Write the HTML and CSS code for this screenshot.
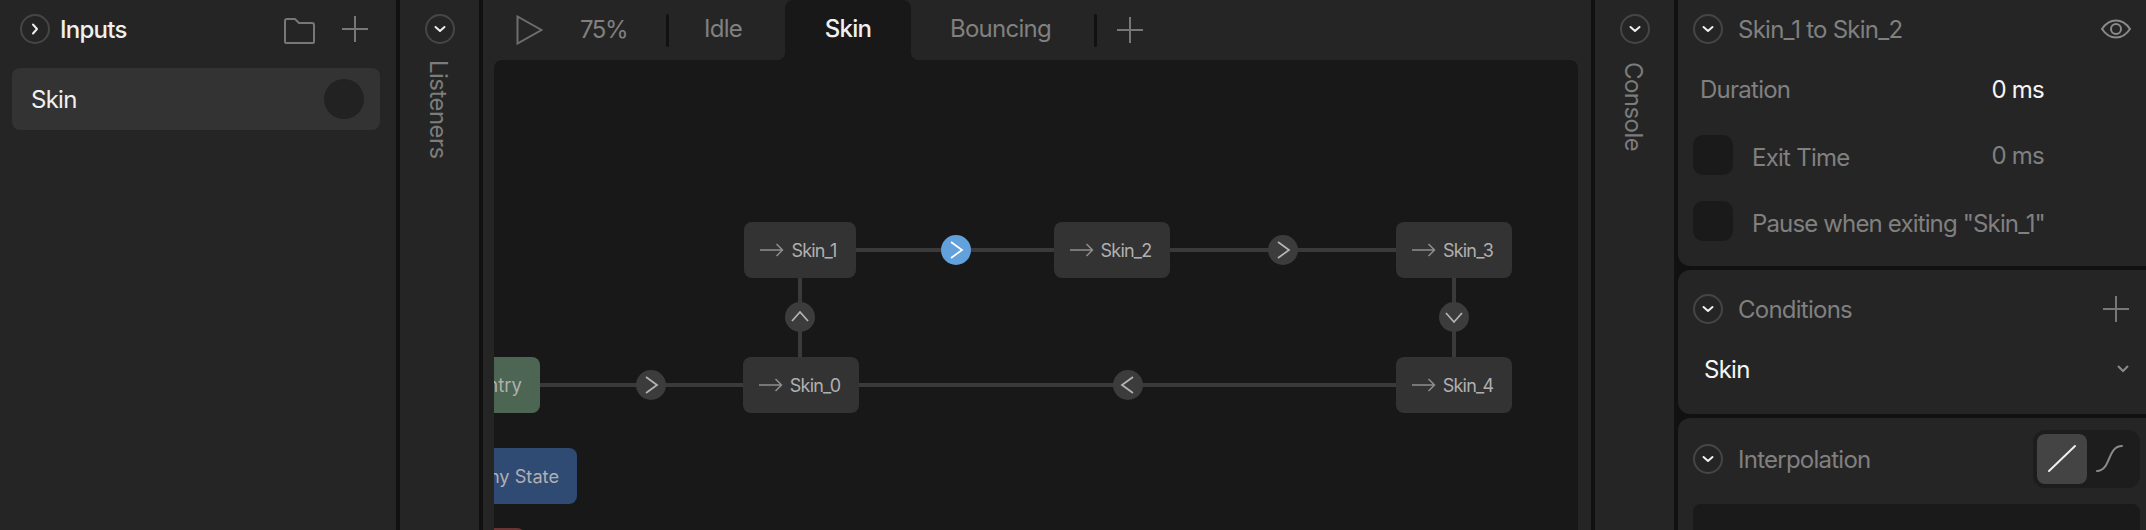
FILE: index.html
```html
<!DOCTYPE html>
<html lang="en">
<head>
<meta charset="utf-8">
<title>State machine editor</title>
<link rel="stylesheet" href="styles.css">
</head>
<body>
<svg class="defs" width="0" height="0" aria-hidden="true">
  <symbol id="chev-down" viewBox="0 0 30 30"><path d="M10.500 13l4.500 4 4.500-4" fill="none" stroke="currentColor" stroke-width="2" stroke-linecap="round" stroke-linejoin="round"/></symbol>
  <symbol id="chev-right" viewBox="0 0 30 30"><path d="M13 10.500l4 4.500-4 4.500" fill="none" stroke="currentColor" stroke-width="2" stroke-linecap="round" stroke-linejoin="round"/></symbol>
  <symbol id="plus" viewBox="0 0 26 26"><path d="M13 0v26M0 13h26" fill="none" stroke="currentColor" stroke-width="2"/></symbol>
  <symbol id="arrow" viewBox="0 0 24 14"><path d="M0 7h22.500M16.500 1l6 6-6 6" fill="none" stroke="currentColor" stroke-width="1.500"/></symbol>
</svg>

<aside class="panel inputs">
  <header class="inputs-head">
    <span class="round"><svg class="ico30 white"><use href="#chev-right"/></svg></span>
    <h2 class="inputs-title">Inputs</h2>
    <svg class="folder" viewBox="0 0 31 26" width="31" height="26"><path d="M1 24V3a2 2 0 0 1 2-2h8l4 4h13a2 2 0 0 1 2 2v17a1 1 0 0 1-1 1H2a1 1 0 0 1-1-1z" fill="none" stroke="#777" stroke-width="2"/></svg>
    <svg class="ico26 gray"><use href="#plus"/></svg>
  </header>
  <div class="input-row"><span>Skin</span><i class="toggle-dot"></i></div>
</aside>

<aside class="panel rail">
  <span class="round"><svg class="ico30 white"><use href="#chev-down"/></svg></span>
  <span class="rail-label">Listeners</span>
</aside>

<main class="panel center">
  <nav class="tabs">
    <svg class="play" viewBox="0 0 27 30" width="27" height="30"><path d="M1.500 1.500L25.500 15 1.500 28.500z" fill="none" stroke="#6e6e6e" stroke-width="2"/></svg>
    <span class="zoom">75%</span>
    <i class="sep"></i>
    <span class="tab tab-idle">Idle</span>
    <span class="tab active">Skin</span>
    <span class="tab tab-bouncing">Bouncing</span>
    <i class="sep sep-end"></i>
    <svg class="ico26 gray add"><use href="#plus"/></svg>
  </nav>
  <section class="canvas">
    <svg class="edges" width="1084" height="470">
      <path d="M250 190H902M306 325H902M306 190V325M960 190V325M46 325H306" fill="none" stroke="#3a3a3a" stroke-width="4"/>
    </svg>

    <div class="node state n-skin1"><svg class="arrow"><use href="#arrow"/></svg>Skin_1</div>
    <div class="node state n-skin2"><svg class="arrow"><use href="#arrow"/></svg>Skin_2</div>
    <div class="node state n-skin3"><svg class="arrow"><use href="#arrow"/></svg>Skin_3</div>
    <div class="node state n-skin0"><svg class="arrow"><use href="#arrow"/></svg>Skin_0</div>
    <div class="node state n-skin4"><svg class="arrow"><use href="#arrow"/></svg>Skin_4</div>
    <div class="node n-entry">Entry</div>
    <div class="node n-any">Any State</div>
    <div class="node n-exit"></div>

    <span class="dot selected d-a"><svg viewBox="0 0 30 30"><path d="M10 7l11 8-11 8" /></svg></span>
    <span class="dot d-b"><svg viewBox="0 0 30 30"><path d="M10 7l11 8-11 8" /></svg></span>
    <span class="dot d-c"><svg viewBox="0 0 30 30"><path d="M7 19l8-9 8 9" /></svg></span>
    <span class="dot d-d"><svg viewBox="0 0 30 30"><path d="M7 11l8 9 8-9" /></svg></span>
    <span class="dot d-e"><svg viewBox="0 0 30 30"><path d="M10 7l11 8-11 8" /></svg></span>
    <span class="dot d-f"><svg viewBox="0 0 30 30"><path d="M20 7l-11 8 11 8" /></svg></span>
  </section>
</main>

<aside class="panel rail">
  <span class="round"><svg class="ico30 white"><use href="#chev-down"/></svg></span>
  <span class="rail-label console">Console</span>
</aside>

<div class="props">
  <section class="card transition">
    <header class="card-head">
      <span class="round"><svg class="ico30 white"><use href="#chev-down"/></svg></span>
      <h3 class="card-title">Skin_1 to Skin_2</h3>
      <svg class="eye" viewBox="0 0 30 20" width="30" height="20"><path d="M1 10C5 4 10 1.500 15 1.500S25 4 29 10c-4 6-9 8.500-14 8.500S5 16 1 10z" fill="none" stroke="#8a8a8a" stroke-width="2"/><circle cx="15" cy="10" r="5" fill="none" stroke="#8a8a8a" stroke-width="2"/></svg>
    </header>
    <div class="duration"><span>Duration</span><b>0 ms</b></div>
    <div class="check-row exit"><i class="check"></i><span class="check-label">Exit Time</span><span class="value">0 ms</span></div>
    <div class="check-row pause"><i class="check"></i><span class="check-label pause-label">Pause when exiting "Skin_1"</span></div>
  </section>

  <section class="card conditions">
    <header class="card-head">
      <span class="round"><svg class="ico30 white"><use href="#chev-down"/></svg></span>
      <h3 class="card-title">Conditions</h3>
      <svg class="ico26 gray"><use href="#plus"/></svg>
    </header>
    <div class="condition"><span>Skin</span><svg class="select-chev" viewBox="0 0 12 8" width="12" height="8"><path d="M1 1l5 5 5-5" fill="none" stroke="#8a8a8a" stroke-width="2"/></svg></div>
  </section>

  <section class="card interpolation">
    <header class="card-head">
      <span class="round"><svg class="ico30 white"><use href="#chev-down"/></svg></span>
      <h3 class="card-title">Interpolation</h3>
      <div class="switch">
        <span class="switch-btn on"><svg viewBox="0 0 50 50" width="50" height="50"><path d="M12 37L38 12" stroke="#eee" stroke-width="2" stroke-linecap="round" fill="none"/></svg></span>
        <span class="switch-btn"><svg viewBox="0 0 50 50" width="50" height="50"><path d="M10 37c14 0 10-25 25-25" stroke="#8a8a8a" stroke-width="2" stroke-linecap="round" fill="none"/></svg></span>
      </div>
    </header>
    <div class="graph"></div>
  </section>
</div>
</body>
</html>
```
FILE: styles.css
```css
* { box-sizing: border-box; }
html, body { margin: 0; height: 530px; overflow: hidden; }
body {
  display: flex;
  gap: 4px;
  width: 2146px;
  background: #111;
  font-family: "Inter", "Liberation Sans", sans-serif;
  font-size: 24px;
  letter-spacing: -0.75px;
  color: #808080;
}
.defs { position: absolute; }
h2, h3 { margin: 0; font: inherit; }

.panel { background: #252525; height: 530px; flex: none; }

.round {
  flex: none;
  width: 30px;
  height: 30px;
  border: 2px solid #464646;
  border-radius: 50%;
  display: flex;
  align-items: center;
  justify-content: center;
}
.ico30 { width: 30px; height: 30px; flex: none; }
.ico26 { width: 26px; height: 26px; flex: none; }
.white { color: #eee; }
.gray { color: #777; }

.inputs { width: 396px; }
.inputs-head {
  display: flex;
  align-items: center;
  height: 58px;
  padding: 0 28px 0 20px;
}
.inputs-title { margin-left: 10px; flex: 1; color: #f0f0f0; font-weight: 500; }
.folder { margin-right: 27px; margin-top: 3px; }
.input-row {
  margin: 10px 16px 0 12px;
  height: 62px;
  border-radius: 8px;
  background: #333;
  display: flex;
  align-items: center;
  justify-content: space-between;
  padding: 0 16px 0 19px;
  color: #f0f0f0;
}
.toggle-dot { width: 40px; height: 40px; border-radius: 50%; background: #222; }

.rail {
  width: 79px;
  padding-top: 14px;
  display: flex;
  flex-direction: column;
  align-items: center;
  gap: 16px;
}
.rail-label { writing-mode: vertical-rl; color: #7c7c7c; line-height: 1; letter-spacing: -0.55px; margin-right: 3px; }
.rail-label.console { margin-top: 2px; }

.center { width: 1108px; display: flex; flex-direction: column; }
.tabs { height: 60px; flex: none; display: flex; align-items: center; padding-left: 33px; }
.play { flex: none; }
.zoom { margin-left: 37px; width: 46px; white-space: nowrap; margin-top: -2px; letter-spacing: -1.5px; }
.sep { width: 3px; height: 33px; background: #111; border-radius: 2px; margin-left: 40px; flex: none; }
.sep-end { margin-left: 43px; }
.tab {
  position: relative;
  height: 60px;
  display: flex;
  align-items: center;
  padding: 0 0 3px;
}
.tab-idle { width: 116px; padding-left: 35px; }
.tab-bouncing { padding-left: 39px; }
.tab.active { width: 126px; justify-content: center; background: #181818; color: #f0f0f0; font-weight: 500; border-radius: 8px 8px 0 0; }
.tab.active::before, .tab.active::after {
  content: "";
  position: absolute;
  bottom: 0;
  width: 8px;
  height: 8px;
}
.tab.active::before { left: -8px; background: radial-gradient(circle at 0 0, transparent 8px, #181818 8px); }
.tab.active::after { right: -8px; background: radial-gradient(circle at 100% 0, transparent 8px, #181818 8px); }
.add { margin-left: 20px; }

.canvas {
  position: relative;
  flex: 1;
  margin: 0 13px 0 11px;
  background: #181818;
  border-radius: 8px 8px 0 0;
  overflow: hidden;
}
.edges { position: absolute; left: 0; top: 0; }
.node {
  position: absolute;
  height: 56px;
  border-radius: 8px;
  display: flex;
  align-items: center;
  justify-content: center;
  gap: 7px;
  font-size: 18px;
  letter-spacing: -0.8px;
  color: #b0b0b0;
  background: #333;
}
.state { padding-right: 3px; }
.arrow { width: 24px; height: 14px; color: #8e8e8e; flex: none; }
.n-skin1 { left: 250px; top: 162px; width: 112px; }
.n-skin2 { left: 560px; top: 162px; width: 116px; }
.n-skin3 { left: 902px; top: 162px; width: 116px; }
.n-skin0 { left: 249px; top: 297px; width: 116px; }
.n-skin4 { left: 902px; top: 297px; width: 116px; }
.n-entry { left: -37px; top: 297px; width: 83px; background: #4d6553; letter-spacing: 0; font-size: 18.5px; justify-content: flex-end; padding-right: 18px; }
.n-any { left: -50px; top: 388px; width: 133px; background: #2f4a73; letter-spacing: 0; font-size: 18.2px; justify-content: flex-end; padding-right: 18px; }
.n-exit { left: -37px; top: 468px; width: 68px; background: #6b3434; }

.dot {
  position: absolute;
  width: 30px;
  height: 30px;
  margin: -15px 0 0 -15px;
  border-radius: 50%;
  background: #3c3c3c;
}
.dot svg { display: block; width: 30px; height: 30px; }
.dot path { fill: none; stroke: #b4b4b4; stroke-width: 1.75; }
.dot.selected { background: #62a1dc; }
.dot.selected path { stroke: #fff; }
.d-a { left: 462px; top: 190px; }
.d-b { left: 789px; top: 190px; }
.d-c { left: 306px; top: 257px; }
.d-d { left: 960px; top: 257px; }
.d-e { left: 157px; top: 325px; }
.d-f { left: 634px; top: 325px; }

.props { flex: 1; height: 530px; overflow: hidden; display: flex; flex-direction: column; gap: 4px; min-width: 0; }
.card { background: #252525; padding: 0 6px 0 15px; flex: none; border-radius: 0 0 0 12px; }
.conditions, .interpolation { border-radius: 12px 0 0 12px; }
.transition { height: 266px; }
.conditions { height: 144px; }
.interpolation { flex: 1; min-height: 0; overflow: hidden; border-radius: 12px 0 0 0; }
.card-head { display: flex; align-items: center; height: 58px; }
.card-title { margin-left: 15px; flex: 1; color: #808080; }
.eye { margin-right: 9px; }
.card-head > .ico26 { margin-right: 11px; }
.duration {
  display: flex;
  justify-content: space-between;
  height: 36px;
  align-items: center;
  margin: 13px 96px 0 7px;
}
.duration b { font-weight: 400; color: #f5f5f5; }
.check-row { display: flex; align-items: center; height: 40px; margin-right: 96px; }
.exit { margin-top: 28px; }
.pause { margin-top: 26px; }
.check { width: 40px; height: 40px; flex: none; border-radius: 10px; background: #1a1a1a; }
.check-label { margin: 5px 0 0 19px; flex: 1; white-space: nowrap; }
.pause-label { letter-spacing: -0.85px; }
.value { margin-top: 1px; }
.conditions .card-head { height: 78px; }
.condition {
  display: flex;
  justify-content: space-between;
  align-items: center;
  height: 30px;
  margin: 6px 11px 0 11px;
  color: #f5f5f5;
}
.interpolation .card-head { height: 82px; }
.switch {
  width: 107px;
  height: 58px;
  padding: 4px;
  border-radius: 12px;
  background: #1d1d1d;
  display: flex;
  gap: 0;
}
.switch-btn { width: 50px; height: 50px; border-radius: 8px; display: block; }
.switch-btn svg { display: block; }
.switch-btn.on { background: #444; }
.graph { height: 40px; margin-top: 4px; border-radius: 8px; background: #1a1a1a; }
```
